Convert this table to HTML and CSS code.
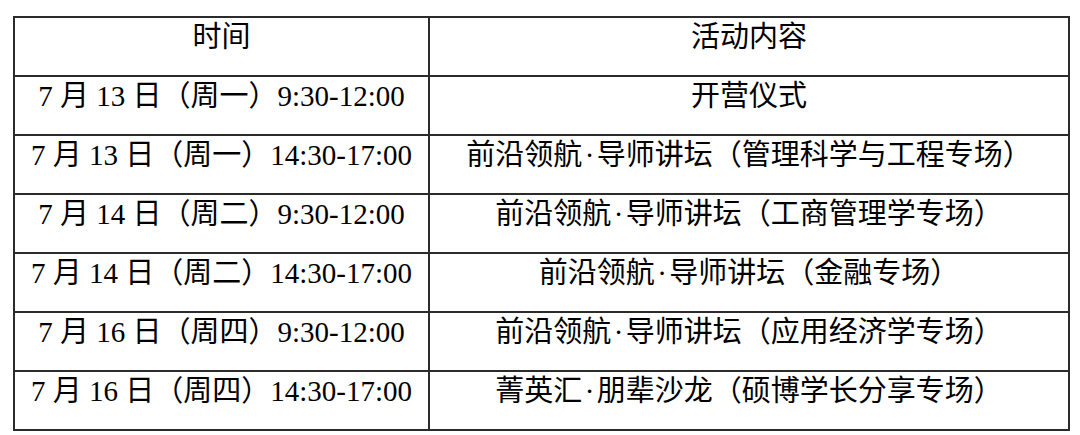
FILE: index.html
```html
<!DOCTYPE html>
<html lang="zh-CN">
<head>
<meta charset="utf-8">
<title>活动安排</title>
<link rel="stylesheet" href="styles.css">
</head>
<body>
<table class="schedule">
  <colgroup>
    <col class="col-time">
    <col class="col-content">
  </colgroup>
  <tr>
    <td>时间</td>
    <td>活动内容</td>
  </tr>
  <tr>
    <td>7 月 13 日（周一）9:30-12:00</td>
    <td>开营仪式</td>
  </tr>
  <tr>
    <td>7 月 13 日（周一）14:30-17:00</td>
    <td>前沿领航<span class="dot">·</span>导师讲坛（管理科学与工程专场）</td>
  </tr>
  <tr>
    <td>7 月 14 日（周二）9:30-12:00</td>
    <td>前沿领航<span class="dot">·</span>导师讲坛（工商管理学专场）</td>
  </tr>
  <tr>
    <td>7 月 14 日（周二）14:30-17:00</td>
    <td>前沿领航<span class="dot">·</span>导师讲坛（金融专场）</td>
  </tr>
  <tr>
    <td>7 月 16 日（周四）9:30-12:00</td>
    <td>前沿领航<span class="dot">·</span>导师讲坛（应用经济学专场）</td>
  </tr>
  <tr>
    <td>7 月 16 日（周四）14:30-17:00</td>
    <td>菁英汇<span class="dot">·</span>朋辈沙龙（硕博学长分享专场）</td>
  </tr>
</table>
</body>
</html>
```
FILE: styles.css
```css
html, body {
  margin: 0;
  padding: 0;
  background: #ffffff;
}

body {
  padding: 16px 0 0 13px;
}

.schedule {
  border-collapse: collapse;
  width: 1057px;
  table-layout: fixed;
  font-family: "Liberation Serif", "Noto Sans CJK SC", serif;
  font-size: 29px;
  line-height: 34px;
  color: #000;
}

.col-time {
  width: 415px;
}

.schedule tr {
  height: 59px;
}

.schedule td {
  border: 2px solid #2b2b2b;
  padding: 2px 0 0 0;
  text-align: center;
  vertical-align: top;
  white-space: nowrap;
}

.dot {
  display: inline-block;
  width: 0.5em;
  text-align: center;
}
```
